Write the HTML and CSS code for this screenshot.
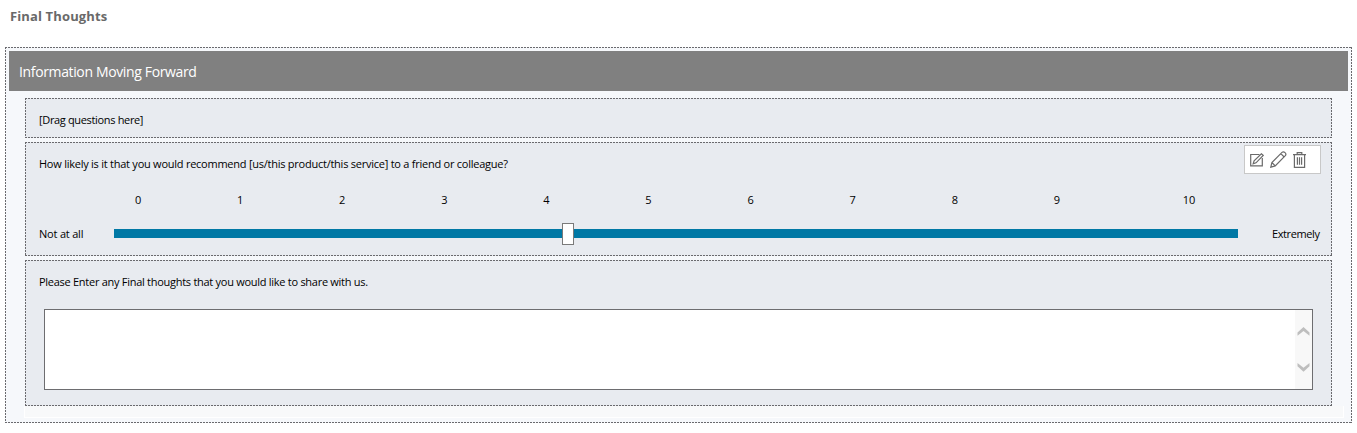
FILE: index.html
```html
<!DOCTYPE html>
<html lang="en">
<head>
<meta charset="utf-8">
<title>Final Thoughts</title>
<link rel="stylesheet" href="styles.css">
</head>
<body>
<h1 class="page-title"><span>Final Thoughts</span></h1>
<main class="section dashed">
  <h2 class="section-header"><span>Information Moving Forward</span></h2>
  <div class="questions">
    <section class="card dashed card-drop"><p class="prompt drop">[Drag questions here]</p></section>
    <section class="card dashed card-scale">
      <p class="prompt likely"><span>How likely is it that you would recommend [us/this product/this service] to a friend or colleague?</span></p>
      <div class="tools">
        <svg width="14" height="14" viewBox="0 0 14 14"><path d="M9.5 1.5H.7v11.4h11.6V5"/><path d="M3.2 10.8l.9-2.9L11.4.8l1.8 1.6-7.2 7.4z"/></svg>
        <svg width="17" height="17" viewBox="0 0 17 17"><path d="M.8 16.2l1.1-4.7L12 1.4q1.4-1.2 3 .2t.3 3.1L5.2 14.9zM1.9 11.5l3.3 3.4M10.8 2.6l3.4 3.4"/></svg>
        <svg width="13" height="16" viewBox="0 0 13 16"><path d="M0 2.7h13M4.2 2.5V.7h4.6v1.8M1.4 3v12.3h10.2V3M4.4 5.3v7.4M6.5 5.3v7.4M8.6 5.3v7.4"/></svg>
      </div>
      <div class="scale-labels"><span>0</span><span>1</span><span>2</span><span>3</span><span>4</span><span>5</span><span>6</span><span>7</span><span>8</span><span>9</span><span class="last">10</span></div>
      <div class="slider-row">
        <span class="low">Not at all</span>
        <div class="track"><div class="thumb"></div></div>
        <span class="high">Extremely</span>
      </div>
    </section>
    <section class="card dashed card-text">
      <p class="prompt final"><span>Please Enter any Final thoughts that you would like to share with us.</span></p>
      <div class="textbox">
        <div class="scrollbar">
          <svg width="13" height="9" viewBox="0 0 13 9"><path d="M.5 8.8V5.6L6.5 0l6 5.6v3.2L6.5 4z"/></svg>
          <svg width="13" height="9" viewBox="0 0 13 9"><path d="M.5 0v3.2L6.5 8.8l6-5.6V0L6.5 4.8z"/></svg>
        </div>
      </div>
    </section>
  </div>
  <div class="footer-strip"></div>
</main>
</body>
</html>
```
FILE: styles.css
```css
* { box-sizing: border-box; }
body {
  margin: 0;
  padding: 0 5px;
  height: 433px;
  overflow: hidden;
  background: #fff;
  color: #000;
  font: 11px/16px "Open Sans", "Noto Sans", sans-serif;
}
h1, h2, p { margin: 0; }
.page-title {
  height: 47px;
  padding: 6px 5px 0;
  color: #696969;
  font-size: 13px;
  line-height: 20px;
  font-weight: 700;
  letter-spacing: 0.13px;
}
.dashed {
  --h: repeating-linear-gradient(90deg, #6a6a6e 0 2px, transparent 2px 3px);
  --v: repeating-linear-gradient(180deg, #6a6a6e 0 2px, transparent 2px 3px);
  background-image: var(--h), var(--h), var(--v), var(--v);
  background-size: 100% 1px, 100% 1px, 1px 100%, 1px 100%;
  background-position: top, bottom, left, right;
  background-repeat: no-repeat;
}
.section {
  width: 1347px;
  height: 376px;
  padding: 4px 4px 0;
  background-color: #f6f8fb;
}
.section-header {
  height: 40px;
  padding: 0 10px;
  background: #808080;
  color: #fff;
  font-size: 14px;
  line-height: 41px;
  font-weight: 400;
  letter-spacing: -0.36px;
}
.questions {
  display: flex;
  flex-direction: column;
  gap: 4px;
  width: 1307px;
  margin: 7px 0 0 16px;
}
.card {
  position: relative;
  padding: 0 14px;
  background-color: #e8ebf0;
}
.card-drop { height: 40px; padding-top: 14px; }
.card-scale { height: 114px; padding-top: 14px; }
.card-text { height: 146px; padding-top: 14px; }
.prompt { height: 16px; white-space: nowrap; }
.drop { letter-spacing: -0.34px; }
.likely { letter-spacing: -0.245px; }
.final { letter-spacing: -0.275px; }
.tools {
  position: absolute;
  top: 3px;
  right: 11px;
  display: flex;
  align-items: center;
  gap: 6px;
  width: 77px;
  height: 29px;
  padding-left: 5px;
  border: 1px solid #c8c8c8;
  background: #fff;
}
.tools svg { flex: none; fill: none; stroke: #6a6a6a; stroke-width: 1.2; }
.scale-labels {
  display: flex;
  height: 16px;
  margin: 20px 0 0 48px;
}
.scale-labels span { width: 102.1px; text-align: center; }
.scale-labels .last { width: 162px; }
.slider-row {
  display: flex;
  align-items: center;
  height: 24px;
  margin-top: 13px;
  padding-top: 1px;
  white-space: nowrap;
}
.low { flex: none; width: 75px; padding-top: 1px; letter-spacing: -0.2px; }
.track {
  position: relative;
  flex: none;
  width: 1124px;
  height: 9px;
  background: #0078a5;
}
.thumb {
  position: absolute;
  left: 448px;
  top: -6px;
  width: 12px;
  height: 22px;
  border: 1px solid #7a7a7a;
  background: #fff;
}
.high { flex: none; margin-left: 34px; padding-top: 1px; letter-spacing: -0.4px; }
.textbox {
  display: flex;
  justify-content: flex-end;
  width: 1269px;
  height: 81px;
  margin: 19px 0 0 5px;
  border: 1px solid #6d6d70;
  background: #fff;
}
.scrollbar {
  display: flex;
  flex-direction: column;
  justify-content: space-between;
  align-items: center;
  width: 17px;
  padding: 17px 0;
  background: #f8f8f8;
}
.scrollbar svg { fill: #bebebe; }
.footer-strip {
  width: 1320px;
  height: 12px;
  margin-left: 15px;
  border: 1px solid #fff;
  border-top: 0;
  background: #f8f9fa;
}
```
